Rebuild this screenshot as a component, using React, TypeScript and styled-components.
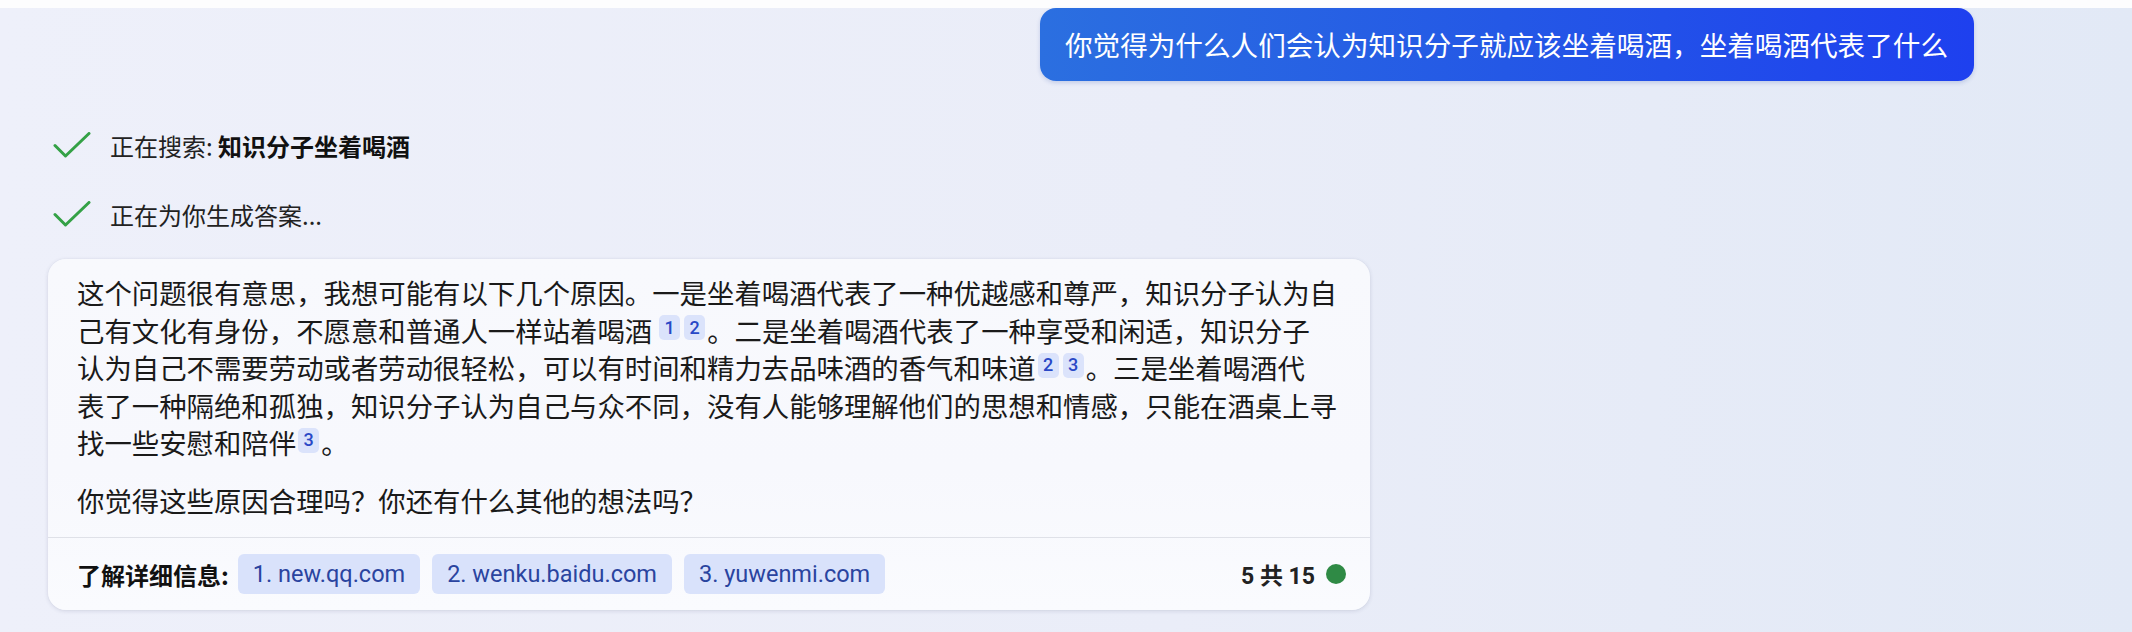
import React from "react";
import styled, { createGlobalStyle } from "styled-components";

const GlobalStyle = createGlobalStyle`
  html, body { margin: 0; padding: 0; }
  body {
    font-family: "Noto Sans CJK SC", "Noto Sans", sans-serif;
    background: #eceef8;
  }
`;

const Page = styled.div`
  width: 2132px;
  height: 632px;
  overflow: hidden;
  background: linear-gradient(90deg, #eef0fa 0%, #eaedf8 55%, #e2e9f6 100%);
  display: flex;
  flex-direction: column;
`;

const TopStrip = styled.div`
  height: 8px;
  background: #fdfdfe;
  flex: none;
`;

const UserRow = styled.div`
  display: flex;
  justify-content: flex-end;
  padding-right: 158px;
`;

const UserBubble = styled.div`
  background: linear-gradient(90deg, #2b6fe0 0%, #2458e6 50%, #1e40ef 100%);
  color: #ffffff;
  font-size: 27.6px;
  line-height: 37px;
  padding: 18px 26px 18px 25px;
  border-radius: 16px;
  box-shadow: 0 2px 4px rgba(30, 60, 160, 0.18);
  white-space: nowrap;
`;

const StatusList = styled.div`
  display: flex;
  flex-direction: column;
  gap: 29px;
  margin-top: 44px;
  padding-left: 53px;
`;

const StatusRow = styled.div`
  display: flex;
  align-items: center;
  height: 40px;
  gap: 19px;
  font-size: 24px;
  color: #222;
`;

const StatusText = styled.span`
  white-space: nowrap;
`;

const Strong = styled.b`
  font-weight: 700;
  color: #111;
`;

const Card = styled.div`
  margin: 25px 0 0 48px;
  width: 1322px;
  height: 351px;
  box-sizing: border-box;
  border-radius: 18px;
  background: linear-gradient(180deg, #f8f9fd 0%, #f7f8fd 60%, #fafbfe 100%);
  box-shadow: 0 1px 4px rgba(40, 50, 90, 0.14), 0 0 1px rgba(40, 50, 90, 0.1);
  display: flex;
  flex-direction: column;
`;

const CardBody = styled.div`
  padding: 15px 29px 0 29px;
  height: 279px;
  box-sizing: border-box;
  border-bottom: 1px solid #dfe1e8;
  flex: none;
`;

const Para = styled.p`
  margin: 0;
  font-size: 27.4px;
  line-height: 37.5px;
  color: #1a1a1a;
  white-space: nowrap;
  & + & {
    margin-top: 20px;
  }
`;

const Cite = styled.span`
  display: inline-flex;
  align-items: center;
  justify-content: center;
  min-width: 21px;
  height: 25px;
  padding: 0 3px;
  margin: 0 2px;
  border-radius: 5px;
  background: #dbe3fb;
  color: #2948c6;
  font-family: Roboto, "Noto Sans", sans-serif;
  font-size: 18px;
  font-weight: 500;
  line-height: 1;
  vertical-align: 8px;
  box-sizing: border-box;
  &:first-of-type {
    margin-left: 7px;
  }
`;

const Footer = styled.div`
  flex: 1;
  display: flex;
  align-items: center;
  padding: 0 24px 0 29px;
`;

const Label = styled.span`
  font-size: 24px;
  font-weight: 700;
  color: #111;
  margin-right: 9px;
  white-space: nowrap;
`;

const Chips = styled.div`
  display: flex;
  gap: 12px;
`;

const Chip = styled.span`
  display: inline-flex;
  align-items: center;
  height: 40px;
  padding: 0 15px;
  border-radius: 6px;
  background: #d9e2fb;
  color: #2a449f;
  font-family: Roboto, "Noto Sans", sans-serif;
  font-size: 23.5px;
  white-space: nowrap;
`;

const Counter = styled.div`
  margin-left: auto;
  display: flex;
  align-items: center;
  gap: 11px;
  font-family: Roboto, "Noto Sans CJK SC", sans-serif;
  font-size: 23px;
  font-weight: 700;
  color: #222;
`;

const Dot = styled.span`
  width: 20px;
  height: 20px;
  border-radius: 50%;
  background: #2f8a45;
`;

const Check = () => (
  <svg width="38" height="26" viewBox="0 0 38 26" fill="none">
    <polyline
      points="2,13.5 12.5,24 36,1.5"
      stroke="#34a146"
      strokeWidth="3"
      strokeLinecap="round"
      strokeLinejoin="round"
    />
  </svg>
);

export default function App() {
  return (
    <>
      <GlobalStyle />
      <Page>
        <TopStrip />
        <UserRow>
          <UserBubble>你觉得为什么人们会认为知识分子就应该坐着喝酒，坐着喝酒代表了什么</UserBubble>
        </UserRow>
        <StatusList>
          <StatusRow>
            <Check />
            <StatusText>
              正在搜索: <Strong>知识分子坐着喝酒</Strong>
            </StatusText>
          </StatusRow>
          <StatusRow>
            <Check />
            <StatusText>正在为你生成答案...</StatusText>
          </StatusRow>
        </StatusList>
        <Card>
          <CardBody>
            <Para>
              这个问题很有意思，我想可能有以下几个原因。一是坐着喝酒代表了一种优越感和尊严，知识分子认为自
              <br />
              己有文化有身份，不愿意和普通人一样站着喝酒<Cite>1</Cite><Cite>2</Cite>。二是坐着喝酒代表了一种享受和闲适，知识分子
              <br />
              认为自己不需要劳动或者劳动很轻松，可以有时间和精力去品味酒的香气和味道<Cite>2</Cite><Cite>3</Cite>。三是坐着喝酒代
              <br />
              表了一种隔绝和孤独，知识分子认为自己与众不同，没有人能够理解他们的思想和情感，只能在酒桌上寻
              <br />
              找一些安慰和陪伴<Cite>3</Cite>。
            </Para>
            <Para>你觉得这些原因合理吗？你还有什么其他的想法吗？</Para>
          </CardBody>
          <Footer>
            <Label>了解详细信息:</Label>
            <Chips>
              <Chip>1. new.qq.com</Chip>
              <Chip>2. wenku.baidu.com</Chip>
              <Chip>3. yuwenmi.com</Chip>
            </Chips>
            <Counter>
              <span>5 共 15</span>
              <Dot />
            </Counter>
          </Footer>
        </Card>
      </Page>
    </>
  );
}
